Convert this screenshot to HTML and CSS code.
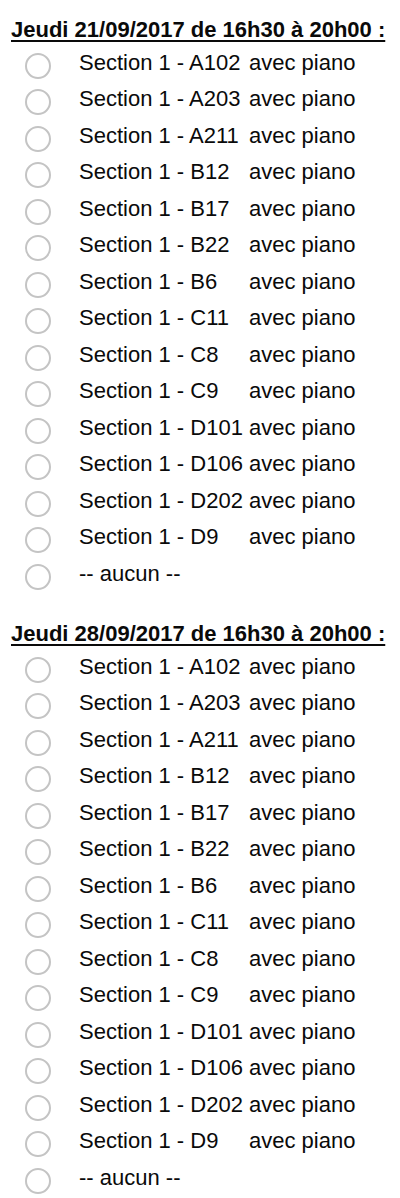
FILE: index.html
```html
<!DOCTYPE html>
<html lang="fr">
<head>
<meta charset="utf-8">
<link rel="stylesheet" href="styles.css">
</head>
<body>
<div class="page">
  <section class="block">
    <h2 class="date">Jeudi 21/09/2017 de 16h30 à 20h00 :</h2>
    <ul class="options">
      <li class="opt"><span class="radio"></span><span class="room">Section 1 - A102</span><span class="note">avec piano</span></li>
      <li class="opt"><span class="radio"></span><span class="room">Section 1 - A203</span><span class="note">avec piano</span></li>
      <li class="opt"><span class="radio"></span><span class="room">Section 1 - A211</span><span class="note">avec piano</span></li>
      <li class="opt"><span class="radio"></span><span class="room">Section 1 - B12</span><span class="note">avec piano</span></li>
      <li class="opt"><span class="radio"></span><span class="room">Section 1 - B17</span><span class="note">avec piano</span></li>
      <li class="opt"><span class="radio"></span><span class="room">Section 1 - B22</span><span class="note">avec piano</span></li>
      <li class="opt"><span class="radio"></span><span class="room">Section 1 - B6</span><span class="note">avec piano</span></li>
      <li class="opt"><span class="radio"></span><span class="room">Section 1 - C11</span><span class="note">avec piano</span></li>
      <li class="opt"><span class="radio"></span><span class="room">Section 1 - C8</span><span class="note">avec piano</span></li>
      <li class="opt"><span class="radio"></span><span class="room">Section 1 - C9</span><span class="note">avec piano</span></li>
      <li class="opt"><span class="radio"></span><span class="room">Section 1 - D101</span><span class="note">avec piano</span></li>
      <li class="opt"><span class="radio"></span><span class="room">Section 1 - D106</span><span class="note">avec piano</span></li>
      <li class="opt"><span class="radio"></span><span class="room">Section 1 - D202</span><span class="note">avec piano</span></li>
      <li class="opt"><span class="radio"></span><span class="room">Section 1 - D9</span><span class="note">avec piano</span></li>
      <li class="opt"><span class="radio"></span><span class="room">-- aucun --</span><span class="note"></span></li>
    </ul>
  </section>
  <section class="block">
    <h2 class="date">Jeudi 28/09/2017 de 16h30 à 20h00 :</h2>
    <ul class="options">
      <li class="opt"><span class="radio"></span><span class="room">Section 1 - A102</span><span class="note">avec piano</span></li>
      <li class="opt"><span class="radio"></span><span class="room">Section 1 - A203</span><span class="note">avec piano</span></li>
      <li class="opt"><span class="radio"></span><span class="room">Section 1 - A211</span><span class="note">avec piano</span></li>
      <li class="opt"><span class="radio"></span><span class="room">Section 1 - B12</span><span class="note">avec piano</span></li>
      <li class="opt"><span class="radio"></span><span class="room">Section 1 - B17</span><span class="note">avec piano</span></li>
      <li class="opt"><span class="radio"></span><span class="room">Section 1 - B22</span><span class="note">avec piano</span></li>
      <li class="opt"><span class="radio"></span><span class="room">Section 1 - B6</span><span class="note">avec piano</span></li>
      <li class="opt"><span class="radio"></span><span class="room">Section 1 - C11</span><span class="note">avec piano</span></li>
      <li class="opt"><span class="radio"></span><span class="room">Section 1 - C8</span><span class="note">avec piano</span></li>
      <li class="opt"><span class="radio"></span><span class="room">Section 1 - C9</span><span class="note">avec piano</span></li>
      <li class="opt"><span class="radio"></span><span class="room">Section 1 - D101</span><span class="note">avec piano</span></li>
      <li class="opt"><span class="radio"></span><span class="room">Section 1 - D106</span><span class="note">avec piano</span></li>
      <li class="opt"><span class="radio"></span><span class="room">Section 1 - D202</span><span class="note">avec piano</span></li>
      <li class="opt"><span class="radio"></span><span class="room">Section 1 - D9</span><span class="note">avec piano</span></li>
      <li class="opt"><span class="radio"></span><span class="room">-- aucun --</span><span class="note"></span></li>
    </ul>
  </section>
</div>
</body>
</html>
```

FILE: styles.css
```css
html, body {
  margin: 0;
  padding: 0;
  background: #ffffff;
}

body {
  font-family: "Liberation Sans", Arial, sans-serif;
  color: #000000;
}

.page {
  padding: 17px 0 0 11px;
  display: flex;
  flex-direction: column;
  gap: 29px;
}

.date {
  margin: 0;
  font-size: 22px;
  font-weight: bold;
  line-height: 26px;
  text-decoration: underline;
  text-underline-offset: 3px;
  text-decoration-thickness: 2px;
  color: #0a0a0a;
}

.options {
  list-style: none;
  margin: 1.5px 0 0 0;
  padding: 0;
}

.opt {
  display: grid;
  grid-template-columns: 26px 198px auto;
  align-items: center;
  height: 36.5px;
  font-size: 22px;
  line-height: 36.5px;
  padding-left: 14px;
}

.radio {
  width: 22px;
  height: 22px;
  border: 2px solid #c4c4c4;
  border-radius: 50%;
  box-sizing: content-box;
  margin-top: 6px;
}

.room {
  padding-left: 28px;
  white-space: nowrap;
  color: #0a0a0a;
}

.note {
  white-space: nowrap;
  color: #0a0a0a;
}
```
